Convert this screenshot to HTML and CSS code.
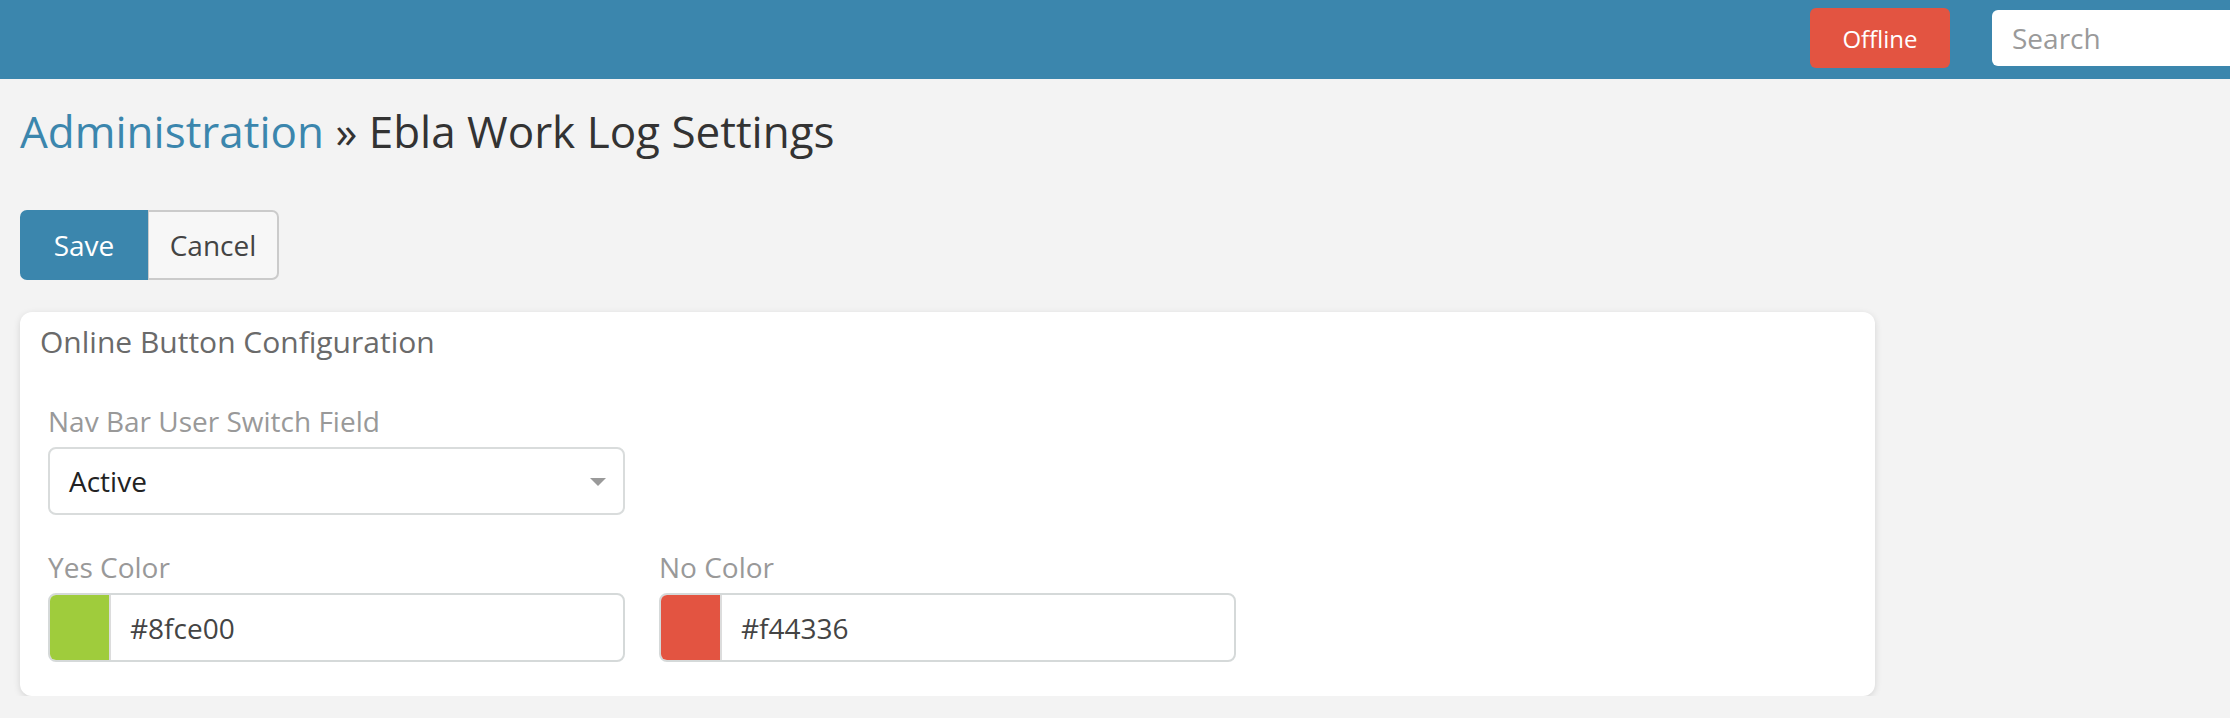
FILE: index.html
```html
<!DOCTYPE html>
<html lang="en">
<head>
<meta charset="utf-8">
<title>Ebla Work Log Settings</title>
<link rel="stylesheet" href="styles.css">
</head>
<body>
<header class="navbar">
  <div class="spacer"></div>
  <button class="btn-offline" type="button">Offline</button>
  <input class="search" type="text" placeholder="Search">
</header>
<main class="page">
  <h1 class="title"><a class="crumb" href="#">Administration</a> » Ebla Work Log Settings</h1>
  <div class="btn-group">
    <button class="btn btn-save" type="button">Save</button>
    <button class="btn btn-cancel" type="button">Cancel</button>
  </div>
  <section class="card">
    <div class="card-title">Online Button Configuration</div>
    <div class="form-grid">
      <div class="field">
        <label class="label">Nav Bar User Switch Field</label>
        <div class="select">
          <span class="select-value">Active</span>
          <svg class="caret" width="16" height="8" viewBox="0 0 16 8"><path d="M0 0H16L8 8Z" fill="#9a9a9a"/></svg>
        </div>
      </div>
      <div></div>
      <div class="field">
        <label class="label">Yes Color</label>
        <div class="color-input">
          <span class="swatch swatch-yes"></span>
          <span class="color-value">#8fce00</span>
        </div>
      </div>
      <div class="field">
        <label class="label">No Color</label>
        <div class="color-input">
          <span class="swatch swatch-no"></span>
          <span class="color-value">#f44336</span>
        </div>
      </div>
    </div>
  </section>
</main>
</body>
</html>
```

FILE: styles.css
```css
* { box-sizing: border-box; }
html, body { margin: 0; padding: 0; }
body {
  background: #f3f3f3;
  font-family: "Open Sans", "Liberation Sans", sans-serif;
  color: #333;
  overflow: hidden;
}
.navbar {
  height: 79px;
  background: #3b86ad;
  display: grid;
  grid-template-columns: 1fr 140px 238px;
  column-gap: 42px;
  align-items: center;
  padding-bottom: 3px;
}
.btn-offline {
  height: 60px;
  border: 0;
  border-radius: 6px;
  background: #e35441;
  color: #fff;
  font-family: inherit;
  font-size: 24px;
  padding: 0;
}
.search {
  height: 56px;
  border: 0;
  border-radius: 6px 0 0 6px;
  background: #fff;
  font-family: inherit;
  font-size: 28px;
  padding: 0 20px;
  outline: none;
}
.search::placeholder { color: #9a9a9a; }
.page { padding: 0 20px; }
.title {
  margin: 22px 0 0;
  font-size: 44px;
  line-height: 60px;
  font-weight: 400;
  color: #333;
}
.crumb { color: #3b86ad; text-decoration: none; }
.btn-group {
  display: flex;
  margin-top: 49px;
}
.btn {
  height: 70px;
  font-family: inherit;
  font-size: 28px;
  line-height: 1;
  margin: 0;
}
.btn-save {
  background: #3b86ad;
  color: #fff;
  border: 0;
  border-radius: 7px 0 0 7px;
  width: 128px;
  padding: 0;
}
.btn-cancel {
  background: #f7f7f7;
  color: #444;
  border: 2px solid #cbcbcb;
  border-left-width: 1px;
  border-radius: 0 7px 7px 0;
  width: 131px;
  padding: 0;
}
.card {
  margin-top: 32px;
  width: 1855px;
  height: 384px;
  background: #fff;
  border-radius: 12px;
  box-shadow: 0 2px 7px rgba(0, 0, 0, 0.13);
  padding: 10px 28px 0 28px;
}
.card-title {
  font-size: 30px;
  line-height: 40px;
  color: #6a6a6a;
  margin-left: -8px;
}
.form-grid {
  display: grid;
  grid-template-columns: 577px 577px;
  column-gap: 34px;
  row-gap: 33px;
  margin-top: 40px;
}
.field { display: flex; flex-direction: column; }
.label {
  font-size: 28px;
  line-height: 38px;
  color: #999;
  margin-bottom: 7px;
}
.select {
  height: 68px;
  border: 2px solid #d9dcdc;
  border-radius: 8px;
  display: flex;
  align-items: center;
  justify-content: space-between;
  padding: 0 17px 0 19px;
}
.select-value { font-size: 28px; color: #222; }
.caret { display: block; margin-top: 2px; }
.color-input {
  height: 69px;
  border: 2px solid #d5d9d9;
  border-radius: 8px;
  display: flex;
  align-items: center;
  overflow: hidden;
}
.swatch {
  width: 61px;
  align-self: stretch;
  border-right: 2px solid #dcdcdc;
  flex-shrink: 0;
}
.swatch-yes { background: #9fcc3c; }
.swatch-no { background: #e35441; }
.color-value {
  font-size: 28px;
  color: #444;
  margin-left: 19px;
}
```
